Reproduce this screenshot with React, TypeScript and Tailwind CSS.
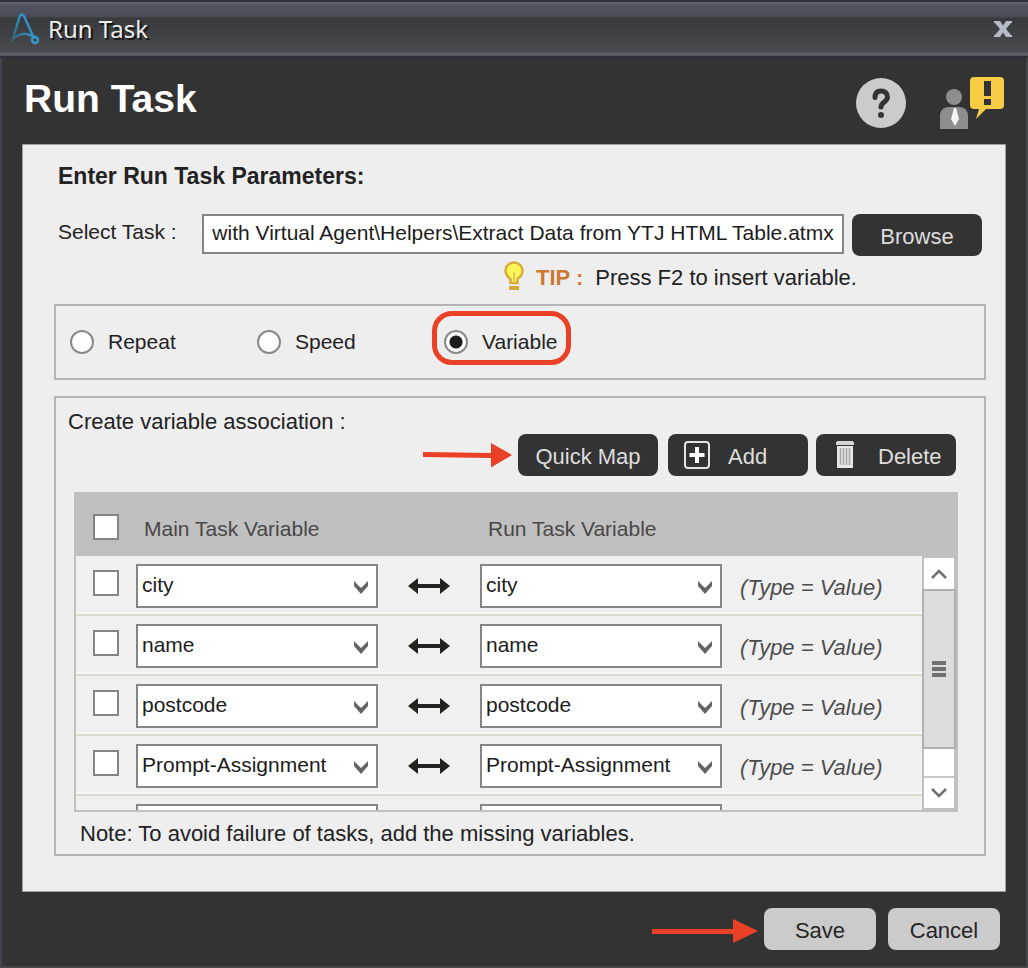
import { useState } from "react";

const ROWS = ["city", "name", "postcode", "Prompt-Assignment", ""];
const MODES = ["Repeat", "Speed", "Variable"];

function LogoIcon() {
  return (
    <svg width="30" height="34" viewBox="0 0 30 34" fill="none" aria-hidden="true">
      <defs>
        <linearGradient id="logoStroke" x1="0" y1="1" x2="1" y2="0.4">
          <stop offset="0" stopColor="#3f5a66" />
          <stop offset="0.5" stopColor="#2f86b4" />
          <stop offset="1" stopColor="#3399cf" />
        </linearGradient>
      </defs>
      <path
        d="M2 29C5 20 8 9 10 4c1-2 3-2 4 0l9 20M3 27c5-5 13-7 19-3"
        stroke="url(#logoStroke)"
        strokeWidth="2.400"
        strokeLinecap="round"
      />
      <circle cx="25" cy="28" r="3" stroke="#3399cf" strokeWidth="2.400" />
    </svg>
  );
}

function HelpIcon() {
  return (
    <svg width="50" height="50" viewBox="0 0 50 50" aria-hidden="true">
      <circle cx="25" cy="25" r="25" fill="#cbcbcb" />
      <path
        d="M19 19.500C19 15 21 13 25 13s6.500 2.500 6.500 6c0 5-6.500 5-6.500 10"
        fill="none"
        stroke="#333"
        strokeWidth="5"
        strokeLinecap="round"
      />
      <circle cx="25" cy="37" r="3" fill="#333" />
    </svg>
  );
}

function UserAlertIcon() {
  return (
    <svg width="64" height="52" viewBox="0 0 64 52" aria-hidden="true">
      <circle cx="14" cy="20" r="8" fill="#8e8e8e" />
      <path d="M0 52V39c0-6 4-9 9-9h10c5 0 9 3 9 9v13z" fill="#8e8e8e" />
      <path d="M14 31h2l3 11-4 7-4-7z" fill="#f4f4f4" />
      <path
        d="M34 0h26q4 0 4 4v24q0 4-4 4H46l-10 10 3-10h-5q-4 0-4-4V4q0-4 4-4z"
        fill="#f7cd45"
      />
      <path d="M45 5h5v13h-5zM45 23h5v4h-5z" fill="#333" stroke="#333" strokeWidth="2" />
    </svg>
  );
}

function BulbIcon() {
  return (
    <svg width="20" height="30" viewBox="0 0 20 30" aria-hidden="true">
      <path
        d="M6.500 22v-4C3 15.500 1.500 13 1.500 9.500a8.500 8 0 0 1 17 0c0 3.500-1.500 6-5 8.500v4z"
        fill="#fdf65a"
        stroke="#d8ac3a"
        strokeWidth="2.500"
      />
      <path d="M10 11v9" stroke="#e0bc48" strokeWidth="1.500" />
      <path d="M5 25h10v4H5z" fill="#d3a63a" />
    </svg>
  );
}

function PlusBoxIcon() {
  return (
    <svg width="26" height="28" viewBox="0 0 26 28" fill="none" aria-hidden="true">
      <rect x="1" y="1" width="24" height="26" rx="3" stroke="#e3e3e3" strokeWidth="2" />
      <path d="M13 6v16M5.500 14h15" stroke="#fff" strokeWidth="4" />
    </svg>
  );
}

function TrashIcon() {
  return (
    <svg width="18" height="28" viewBox="0 0 18 28" aria-hidden="true">
      <path d="M1 0h16v1h1v3H0V1h1z" fill="#d6d6d6" />
      <path d="M1 5h16v22H1z" fill="#e8e8e8" />
      <path d="M4.500 7v17M7.500 7v17M10.500 7v17M13.500 7v17" stroke="#a4a4a4" strokeWidth="1.500" />
    </svg>
  );
}

function PointerArrow({ long = false }: { long?: boolean }) {
  return long ? (
    <svg className="shrink-0" width="106" height="30" viewBox="0 0 106 30" aria-hidden="true">
      <path d="M0 15h81V5l25 12-25 12V20H0z" fill="#ea4025" />
    </svg>
  ) : (
    <svg className="shrink-0" width="89" height="26" viewBox="0 0 89 26" aria-hidden="true">
      <path d="M0 10l68 1V1l21 12-21 12.500V16L0 15z" fill="#ea4025" />
    </svg>
  );
}

function MapArrow() {
  return (
    <svg className="block" width="42" height="18" viewBox="0 0 42 18" aria-hidden="true">
      <path d="M0 9l10-8v6h22V1l10 8-10 8v-6H10v6z" fill="#22221e" />
    </svg>
  );
}

function Chevron({ up = false }: { up?: boolean }) {
  return (
    <svg width="16" height="12" viewBox="0 0 16 12" fill="none" aria-hidden="true">
      <path d={up ? "M1 10l7-7 7 7" : "M1 2l7 7 7-7"} stroke="#707070" strokeWidth="2.500" />
    </svg>
  );
}

function Check({ label }: { label: string }) {
  return (
    <input
      type="checkbox"
      aria-label={label}
      className="block size-[26px] appearance-none border-2 border-[#858585] bg-white checked:bg-[#555]"
    />
  );
}

function VariableSelect({ label, value }: { label: string; value: string }) {
  return (
    <div className="relative w-[242px]">
      <select
        aria-label={label}
        defaultValue={value}
        className="block h-11 w-full appearance-none border-2 border-[#858585] bg-white pr-8 pb-[2px] pl-1 text-[21px] text-[#1c1c1c]"
      >
        {ROWS.map((v) => (
          <option key={v}>{v}</option>
        ))}
      </select>
      <svg
        className="pointer-events-none absolute top-4 right-[9px]"
        width="16"
        height="16"
        viewBox="0 0 16 16"
        aria-hidden="true"
      >
        <path d="M1 1l7 7 7-7v5l-7 8-7-8z" fill="#646464" />
      </svg>
    </div>
  );
}

const darkButton =
  "flex h-[42px] items-center rounded-lg bg-[#333] pt-[3px] text-[22px] text-[#dedede]";
const lightButton =
  "h-[42px] w-28 rounded-lg bg-[#cbcbcb] pt-[3px] text-[22px] text-[#262626]";

export default function App() {
  const [mode, setMode] = useState("Variable");

  return (
    <div className="flex min-h-screen flex-col border-x-2 border-b-2 border-[#42454c] bg-[#333] font-['Liberation_Sans',Arial,sans-serif] text-[21px] leading-7 text-[#222]">
      <header className="-mx-[2px] flex h-[58px] shrink-0 items-center border-t-2 border-b-2 border-t-[#303238] border-b-[#2b2f37] bg-[linear-gradient(to_bottom,#666874_0px,#525460_4px,#484a54_15px,#38393c_16px,#4a4b50_50px,#62646f_52px,#4d4f58_54px)] pr-4 pl-[10px]">
        <LogoIcon />
        <span className="ml-2 font-['Noto_Sans',sans-serif] text-2xl text-[#ececec] [text-shadow:2px_2px_1px_#111]">
          Run Task
        </span>
        <button type="button" aria-label="Close" className="ml-auto">
          <svg width="18" height="16" viewBox="0 0 18 16" aria-hidden="true">
            <path
              d="M0 0h6l3 4.500L12 0h6v2h-1l-5 6 5 6h1v2h-6l-3-4.500L6 16H0v-2h1l5-6-5-6H0z"
              fill="#b4bbc6"
            />
          </svg>
        </button>
      </header>

      <div className="flex h-[86px] shrink-0 items-center pr-[22px] pl-[22px]">
        <h1 className="pb-1 text-[39px] leading-10 font-bold text-white">Run Task</h1>
        <div className="ml-auto flex items-center gap-[34px] pt-1">
          <button type="button" aria-label="Help">
            <HelpIcon />
          </button>
          <button type="button" aria-label="Support">
            <UserAlertIcon />
          </button>
        </div>
      </div>

      <main className="mx-5 border border-[#a0a0a0] bg-[#eee] pt-[17px] pr-[19px] pb-[35px] pl-[31px]">
        <h2 className="pl-1 text-[23px] font-bold">Enter Run Task Parameters:</h2>

        <div className="mt-6 flex items-start pr-1 pl-1">
          <label htmlFor="task" className="w-36 shrink-0 pt-1">
            Select Task :
          </label>
          <input
            id="task"
            defaultValue="with Virtual Agent\Helpers\Extract Data from YTJ HTML Table.atmx"
            className="h-10 min-w-0 flex-1 border-2 border-[#858585] bg-white px-px pb-[2px] text-center text-[#1c1c1c]"
          />
          <button type="button" className={`${darkButton} ml-2 w-[130px] justify-center`}>
            Browse
          </button>
        </div>

        <p className="mt-[6px] flex h-7 items-center pl-[450px]">
          <BulbIcon />
          <strong className="ml-3 pt-1 text-[22px] text-[#cb7a34]">TIP :</strong>
          <span className="ml-3 pt-1 text-[22px]">Press F2 to insert variable.</span>
        </p>

        <fieldset className="mt-[14px] flex h-[76px] items-center border-2 border-[#b4b4b4] pl-[14px]">
          {MODES.map((m) => (
            <label key={m} className="relative flex w-[187px] items-center gap-[14px]">
              <input
                type="radio"
                name="mode"
                value={m}
                checked={mode === m}
                onChange={() => setMode(m)}
                className="size-6 shrink-0 appearance-none rounded-full border-2 border-[#8a8a8a] bg-white checked:bg-[radial-gradient(circle,#1c1c1c_6px,#fff_7px)]"
              />
              {m}
              {m === "Variable" && (
                <span className="pointer-events-none absolute -top-[17px] -left-3 h-[54px] w-[139px] rounded-[20px] border-[5px] border-[#ea4025]" />
              )}
            </label>
          ))}
        </fieldset>

        <section className="mt-4 border-2 border-[#b4b4b4] px-3 pt-[10px] pb-[6px]">
          <p className="text-[22px]">Create variable association :</p>
          <div className="-mt-[2px] flex items-center justify-end pr-4">
            <PointerArrow />
            <button type="button" className={`${darkButton} ml-[6px] w-[140px] justify-center`}>
              Quick Map
            </button>
            <button type="button" className={`${darkButton} ml-[10px] w-[140px] gap-[18px] pl-4`}>
              <span className="pb-1">
                <PlusBoxIcon />
              </span>
              Add
            </button>
            <button type="button" className={`${darkButton} ml-2 w-[140px] gap-6 pl-5`}>
              <span className="pb-1">
                <TrashIcon />
              </span>
              Delete
            </button>
          </div>

          <div className="mt-4 mr-[14px] ml-[6px] flex h-80 border-2 border-[#c0c0c0]">
            <div className="min-w-0 flex-1 overflow-hidden">
              <table className="w-full table-fixed border-separate border-spacing-0 text-left">
                <colgroup>
                  <col className="w-[60px]" />
                  <col className="w-[242px]" />
                  <col className="w-[102px]" />
                  <col className="w-[242px]" />
                  <col />
                </colgroup>
                <thead className="bg-[#c0c0c0] text-[#484848]">
                  <tr className="h-[62px]">
                    <th className="pt-1 pl-[17px]">
                      <Check label="Select all" />
                    </th>
                    <th className="pt-2 pl-2 font-normal">Main Task Variable</th>
                    <th aria-label="Direction" />
                    <th className="pt-2 pl-2 font-normal">Run Task Variable</th>
                    <th aria-label="Type" />
                  </tr>
                </thead>
                <tbody>
                  {ROWS.map((v) => (
                    <tr
                      key={v}
                      className="h-[60px] bg-[#f0f0f0] [&>td]:border-b-2 [&>td]:border-[#dcdccc] [&>td]:shadow-[inset_0_-2px_0_#fafafa]"
                    >
                      <td className="pb-1 pl-[17px]">
                        <Check label={`Select ${v}`} />
                      </td>
                      <td className="pt-[2px]">
                        <VariableSelect label={`Main task variable ${v}`} value={v} />
                      </td>
                      <td className="pt-[2px] pl-[30px]">
                        <MapArrow />
                      </td>
                      <td className="pt-[2px]">
                        <VariableSelect label={`Run task variable ${v}`} value={v} />
                      </td>
                      <td className="pt-[6px] pl-[18px] text-[22px] whitespace-nowrap text-[#4c4c4c] italic">
                        {v && "(Type = Value)"}
                      </td>
                    </tr>
                  ))}
                </tbody>
              </table>
            </div>
            <div className="flex w-[34px] shrink-0 flex-col border-x-2 border-b-2 border-[#c0c0c0] bg-white">
              <div className="-mx-[2px] h-16 bg-[#c0c0c0]" />
              <button
                type="button"
                aria-label="Scroll up"
                className="flex h-[31px] items-center justify-center"
              >
                <Chevron up />
              </button>
              <div className="-mx-[2px] flex h-[160px] items-center justify-center border-2 border-[#b0b0b0] bg-[#dcdcdc]">
                <svg width="14" height="16" viewBox="0 0 14 16" aria-hidden="true">
                  <path d="M0 0h14v4H0zM0 6h14v4H0zM0 12h14v4H0z" fill="#707070" />
                </svg>
              </div>
              <div className="flex-1" />
              <button
                type="button"
                aria-label="Scroll down"
                className="flex h-8 items-center justify-center border-t-2 border-[#c8c8c8]"
              >
                <Chevron />
              </button>
            </div>
          </div>

          <p className="mt-2 pl-3 text-[22px]">
            Note: To avoid failure of tasks, add the missing variables.
          </p>
        </section>
      </main>

      <footer className="flex items-center justify-end pt-4 pr-[26px] pb-4">
        <PointerArrow long />
        <button type="button" className={`${lightButton} ml-[6px]`}>
          Save
        </button>
        <button type="button" className={`${lightButton} ml-3`}>
          Cancel
        </button>
      </footer>
    </div>
  );
}
